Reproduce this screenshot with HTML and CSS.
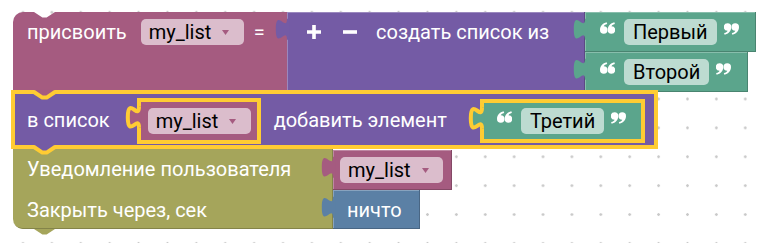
FILE: index.html
```html
<!DOCTYPE html>
<html lang="ru">
<head>
<meta charset="utf-8">
<title>Blockly</title>
<link rel="stylesheet" href="styles.css">
</head>
<body>
<main class="workspace">
  <div class="stack">
    <div class="blk assign">
      <div class="body magenta assign-body">
        <div class="line">
          <span class="lbl">присвоить</span>
          <span class="dd">my_list<svg class="arrow" viewBox="0 0 7 5"><path d="M0 0h7L3.5 5z"/></svg></span>
          <span class="lbl eq">=</span>
        </div>
      </div>
      <div class="blk create">
        <div class="body purple create-body">
          <svg class="tab" viewBox="-10 -2 12 19"><path class="tab-fill" d="M1.6 15H0c0-10-8 8-8-7.5s8 2.5 8-7.5h1.6z"/><path class="tab-edge" d="M0 15c0-10-8 8-8-7.5s8 2.5 8-7.5"/></svg>
          <div class="line">
            <svg class="plus" viewBox="0 0 14 14"><path d="M7 0v14M0 7h14"/></svg>
            <svg class="minus" viewBox="0 0 14 4"><path d="M0 2h14"/></svg>
            <span class="lbl create-lbl">создать список из</span>
          </div>
        </div>
        <div class="items">
          <div class="body green text">
            <svg class="tab" viewBox="-10 -2 12 19"><path class="tab-fill" d="M1.6 15H0c0-10-8 8-8-7.5s8 2.5 8-7.5h1.6z"/><path class="tab-edge" d="M0 15c0-10-8 8-8-7.5s8 2.5 8-7.5"/></svg>
            <svg class="q q-open" viewBox="0 0 14 11"><path d="M6.2 0.2C2.6 1 0 3.8 0 7.4A3.5 3.5 0 1 0 3.5 3.9C3.7 3 4.7 2.2 6.7 1.7Z"/><path transform="translate(7.2 0)" d="M6.2 0.2C2.6 1 0 3.8 0 7.4A3.5 3.5 0 1 0 3.5 3.9C3.7 3 4.7 2.2 6.7 1.7Z"/></svg>
            <span class="field">Первый</span>
            <svg class="q q-close" viewBox="0 0 14 11"><g transform="rotate(180 7 5.5)"><path d="M6.2 0.2C2.6 1 0 3.8 0 7.4A3.5 3.5 0 1 0 3.5 3.9C3.7 3 4.7 2.2 6.7 1.7Z"/><path transform="translate(7.2 0)" d="M6.2 0.2C2.6 1 0 3.8 0 7.4A3.5 3.5 0 1 0 3.5 3.9C3.7 3 4.7 2.2 6.7 1.7Z"/></g></svg>
          </div>
          <div class="body green text">
            <svg class="tab" viewBox="-10 -2 12 19"><path class="tab-fill" d="M1.6 15H0c0-10-8 8-8-7.5s8 2.5 8-7.5h1.6z"/><path class="tab-edge" d="M0 15c0-10-8 8-8-7.5s8 2.5 8-7.5"/></svg>
            <svg class="q q-open" viewBox="0 0 14 11"><path d="M6.2 0.2C2.6 1 0 3.8 0 7.4A3.5 3.5 0 1 0 3.5 3.9C3.7 3 4.7 2.2 6.7 1.7Z"/><path transform="translate(7.2 0)" d="M6.2 0.2C2.6 1 0 3.8 0 7.4A3.5 3.5 0 1 0 3.5 3.9C3.7 3 4.7 2.2 6.7 1.7Z"/></svg>
            <span class="field">Второй</span>
            <svg class="q q-close" viewBox="0 0 14 11"><g transform="rotate(180 7 5.5)"><path d="M6.2 0.2C2.6 1 0 3.8 0 7.4A3.5 3.5 0 1 0 3.5 3.9C3.7 3 4.7 2.2 6.7 1.7Z"/><path transform="translate(7.2 0)" d="M6.2 0.2C2.6 1 0 3.8 0 7.4A3.5 3.5 0 1 0 3.5 3.9C3.7 3 4.7 2.2 6.7 1.7Z"/></g></svg>
          </div>
        </div>
      </div>
    </div>

    <div class="body purple add sel">
      <svg class="notch notch-top" width="50" height="10"><polygon points="21,-2.2 42,-2.2 42,0 33.6,5.6 29.4,5.6 21,0"/><polyline points="17,0 21,0 29.4,5.6 33.6,5.6 42,0 46,0"/></svg>
      <span class="lbl">в список</span>
      <div class="body magenta getter getter-sel sel">
        <svg class="tab" viewBox="-10 -2 12 19"><path class="tab-fill" d="M1.6 15H0c0-10-8 8-8-7.5s8 2.5 8-7.5h1.6z"/><path class="tab-edge" d="M0 15c0-10-8 8-8-7.5s8 2.5 8-7.5"/></svg>
        <span class="dd">my_list<svg class="arrow" viewBox="0 0 7 5"><path d="M0 0h7L3.5 5z"/></svg></span>
      </div>
      <span class="lbl add-lbl">добавить элемент</span>
      <div class="body green text text-sel sel">
        <svg class="tab" viewBox="-10 -2 12 19"><path class="tab-fill" d="M1.6 15H0c0-10-8 8-8-7.5s8 2.5 8-7.5h1.6z"/><path class="tab-edge" d="M0 15c0-10-8 8-8-7.5s8 2.5 8-7.5"/></svg>
        <svg class="q q-open" viewBox="0 0 14 11"><path d="M6.2 0.2C2.6 1 0 3.8 0 7.4A3.5 3.5 0 1 0 3.5 3.9C3.7 3 4.7 2.2 6.7 1.7Z"/><path transform="translate(7.2 0)" d="M6.2 0.2C2.6 1 0 3.8 0 7.4A3.5 3.5 0 1 0 3.5 3.9C3.7 3 4.7 2.2 6.7 1.7Z"/></svg>
        <span class="field">Третий</span>
        <svg class="q q-close" viewBox="0 0 14 11"><g transform="rotate(180 7 5.5)"><path d="M6.2 0.2C2.6 1 0 3.8 0 7.4A3.5 3.5 0 1 0 3.5 3.9C3.7 3 4.7 2.2 6.7 1.7Z"/><path transform="translate(7.2 0)" d="M6.2 0.2C2.6 1 0 3.8 0 7.4A3.5 3.5 0 1 0 3.5 3.9C3.7 3 4.7 2.2 6.7 1.7Z"/></g></svg>
      </div>
      <svg class="notch notch-bottom" width="50" height="10"><polygon points="21,-2.2 42,-2.2 42,0 33.6,5.6 29.4,5.6 21,0"/><polyline points="17,0 21,0 29.4,5.6 33.6,5.6 42,0 46,0"/></svg>
    </div>

    <div class="blk notify">
      <div class="body olive notify-body">
        <div class="row row1"><span class="lbl">Уведомление пользователя</span></div>
        <div class="row row2"><span class="lbl">Закрыть через, сек</span></div>
      </div>
      <div class="args">
        <div class="body magenta getter">
          <svg class="tab" viewBox="-10 -2 12 19"><path class="tab-fill" d="M1.6 15H0c0-10-8 8-8-7.5s8 2.5 8-7.5h1.6z"/><path class="tab-edge" d="M0 15c0-10-8 8-8-7.5s8 2.5 8-7.5"/></svg>
          <span class="dd">my_list<svg class="arrow" viewBox="0 0 7 5"><path d="M0 0h7L3.5 5z"/></svg></span>
        </div>
        <div class="body blue null">
          <svg class="tab" viewBox="-10 -2 12 19"><path class="tab-fill" d="M1.6 15H0c0-10-8 8-8-7.5s8 2.5 8-7.5h1.6z"/><path class="tab-edge" d="M0 15c0-10-8 8-8-7.5s8 2.5 8-7.5"/></svg>
          <span class="lbl">ничто</span>
        </div>
      </div>
    </div>
  </div>
</main>
</body>
</html>
```
FILE: styles.css
```css
* { box-sizing: border-box; }
html, body { margin: 0; padding: 0; }
body {
  width: 766px;
  height: 243px;
  overflow: hidden;
  background-color: #fff;
  background-image: radial-gradient(circle, #c9c9c9 0, #c9c9c9 1px, rgba(201,201,201,0) 1.6px);
  background-size: 28.9px 28.9px;
  background-position: 8.55px -2.15px;
  font-family: Roboto, "Liberation Sans", Arial, sans-serif;
  font-size: 20px;
  line-height: 1;
  color: #fff;
}
.workspace { padding: 12px 0 0 13px; }
.stack { display: flex; flex-direction: column; align-items: flex-start; }

.blk { display: flex; align-items: flex-start; }
.body { position: relative; display: flex; align-items: center; flex: none; }
.lbl { white-space: nowrap; }

.magenta { --c: #a55b80; --d: #844966; background: #a55b80; }
.purple  { --c: #745ba5; --d: #5d4984; background: #745ba5; }
.green   { --c: #5ba58c; --d: #498470; background: #5ba58c; }
.olive   { --c: #a5a55b; --d: #848449; background: #a5a55b; }
.blue    { --c: #5b80a5; --d: #496684; background: #5b80a5; }

.green, .blue, .getter, .create-body {
  box-shadow: inset -1px -1px 0 var(--d), inset 1px 1px 0 rgba(255,255,255,0.28);
}

/* puzzle tab of value blocks */
.tab {
  position: absolute;
  left: -14px;
  top: 4.2px;
  width: 16.8px;
  height: 26.6px;
  overflow: visible;
}
.tab-fill { fill: var(--c); }
.tab-edge { fill: none; stroke: none; }
.sel > .tab .tab-edge { stroke: #fc3; stroke-width: 2.9; }

.sel { box-shadow: inset 0 0 0 2px #fc3, 0 0 0 2px #fc3; }

.line { display: flex; align-items: center; height: 40px; }

/* assign block */
.assign-body {
  width: 274px;
  height: 80px;
  align-items: flex-start;
  padding-left: 14px;
  border-top-left-radius: 10px;
  clip-path: polygon(0 0, 21px 0, 29.4px 5.6px, 33.6px 5.6px, 42px 0, 100% 0, 100% 100%, 0 100%);
}
.assign-body .dd { margin-left: 14px; }
.eq { margin-left: 10px; }

/* dropdown field */
.dd {
  display: flex;
  align-items: center;
  width: 103px;
  height: 26px;
  padding-left: 8px;
  border-radius: 5px;
  background: #dbbdcc;
  color: #000;
}
.arrow { width: 7px; height: 5px; margin-left: 11px; fill: #a55b80; }

/* create list block */
.create-body {
  width: 298px;
  height: 80px;
  align-items: flex-start;
  padding-left: 20px;
}
.plus, .minus { stroke: #fff; stroke-width: 3.6; fill: none; }
.plus { width: 14px; height: 14px; }
.minus { width: 14px; height: 4px; margin-left: 22px; }
.create-lbl { margin-left: 19px; }

.items { display: flex; flex-direction: column; align-items: flex-start; }

/* text blocks */
.text {
  height: 40px;
  align-items: flex-start;
  padding: 0 17px 0 15px;
}
.q { width: 15px; height: 12px; fill: #fff; margin-top: 10px; }
.q-close { margin-top: 11px; }
.field {
  display: flex;
  align-items: center;
  height: 26px;
  margin: 7px 7px 0 9px;
  padding: 0 9px;
  border-radius: 5px;
  background: #bddbd1;
  color: #000;
}

/* add item block (selected) */
.add {
  width: 643px;
  height: 55px;
  align-items: flex-start;
  padding-left: 14px;
  z-index: 1;
}
.add > .lbl { align-self: center; }
.getter { width: 119px; height: 40px; padding-left: 7px; }
.getter-sel { width: 120px; height: 42px; padding-left: 9px; margin: 8px 0 0 29px; }
.add-lbl { margin-left: 15px; }
.text-sel { margin: 9px 0 0 35px; }

.notch { position: absolute; left: 0; overflow: visible; }
.notch-top { top: 0; }
.notch-bottom { top: 100%; }
.notch polyline { fill: none; stroke: #fc3; stroke-width: 4; stroke-linejoin: round; }
.notch-top polygon { fill: #a55b80; }
.notch-bottom polygon { fill: #745ba5; }

/* notify block */
.notify-body {
  width: 320px;
  height: 82px;
  flex-direction: column;
  align-items: stretch;
  border-bottom-left-radius: 10px;
  box-shadow: inset -1px -1px 0 #848449;
}
.notify-body::after {
  content: "";
  position: absolute;
  left: 21px;
  top: 100%;
  width: 21px;
  height: 5.6px;
  background: #a5a55b;
  clip-path: polygon(0 0, 100% 0, 60% 100%, 40% 100%);
}
.row { display: flex; align-items: center; padding-left: 14px; }
.row1 { height: 43px; }
.row2 { height: 39px; }

.args { display: flex; flex-direction: column; align-items: flex-start; padding-top: 3px; }
.null { width: 87px; height: 39px; padding-left: 14px; }
```
